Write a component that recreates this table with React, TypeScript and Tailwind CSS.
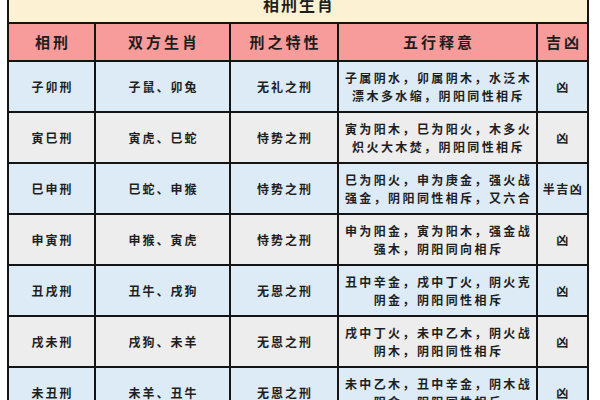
import React from "react";

const ROWS = [
  ["子卯刑", "子鼠、卯兔", "无礼之刑", ["子属阴水，卯属阴木，水泛木", "漂木多水缩，阴阳同性相斥"], "凶"],
  ["寅巳刑", "寅虎、巳蛇", "恃势之刑", ["寅为阳木，巳为阳火，木多火", "炽火大木焚，阴阳同性相斥"], "凶"],
  ["巳申刑", "巳蛇、申猴", "恃势之刑", ["巳为阳火，申为庚金，强火战", "强金，阴阳同性相斥，又六合"], "半吉凶"],
  ["申寅刑", "申猴、寅虎", "恃势之刑", ["申为阳金，寅为阳木，强金战", "强木，阴阳同向相斥"], "凶"],
  ["丑戌刑", "丑牛、戌狗", "无恩之刑", ["丑中辛金，戌中丁火，阴火克", "阴金，阴阳同性相斥"], "凶"],
  ["戌未刑", "戌狗、未羊", "无恩之刑", ["戌中丁火，未中乙木，阴火战", "阴木，阴阳同性相斥"], "凶"],
  ["未丑刑", "未羊、丑牛", "无恩之刑", ["未中乙木，丑中辛金，阴木战", "阴金，阴阳同性相斥"], "凶"],
] as const;

const HEADERS = ["相刑", "双方生肖", "刑之特性", "五行释意", "吉凶"];

export default function App() {
  return (
    <div className="h-[400px] w-[600px] overflow-hidden bg-white font-['Noto_Sans_CJK_SC',sans-serif] font-bold text-[#1e1e1e]">
      <div className="ml-[7px] mt-[-16px] grid w-[582px] grid-cols-[85px_133px_106px_197px_49px] gap-[2px] bg-[#141414] p-[2px]">
        <div className="col-span-5 flex h-[36px] items-center justify-center bg-[#fdf1d3] pl-[2px] text-[16px] tracking-[2px]">
          相刑生肖
        </div>
        {HEADERS.map((h) => (
          <div
            key={h}
            className="flex h-[36px] items-center justify-center bg-[#f79b9b] pl-[3px] text-[15px] tracking-[3px]"
          >
            {h}
          </div>
        ))}
        {ROWS.map((r, i) => {
          const bg = i % 2 === 0 ? "bg-[#ddebf7]" : "bg-[#ededed]";
          return (
            <React.Fragment key={r[0]}>
              <div className={`flex h-[49px] items-center justify-center pl-[2px] text-[12px] tracking-[2px] ${bg}`}>
                {r[0]}
              </div>
              <div className={`flex h-[49px] items-center justify-center pl-[2px] text-[12px] tracking-[2px] ${bg}`}>
                {r[1]}
              </div>
              <div className={`flex h-[49px] items-center justify-center pl-[2px] text-[12px] tracking-[2px] ${bg}`}>
                {r[2]}
              </div>
              <div
                className={`flex h-[49px] flex-col items-center justify-center pl-[2px] text-[12px] leading-[18px] tracking-[2.4px] ${bg}`}
              >
                <span className="whitespace-nowrap">{r[3][0]}</span>
                <span className="whitespace-nowrap">{r[3][1]}</span>
              </div>
              <div className={`flex h-[49px] items-center justify-center pl-[1px] text-[12px] tracking-[1.5px] ${bg}`}>
                {r[4]}
              </div>
            </React.Fragment>
          );
        })}
      </div>
    </div>
  );
}
